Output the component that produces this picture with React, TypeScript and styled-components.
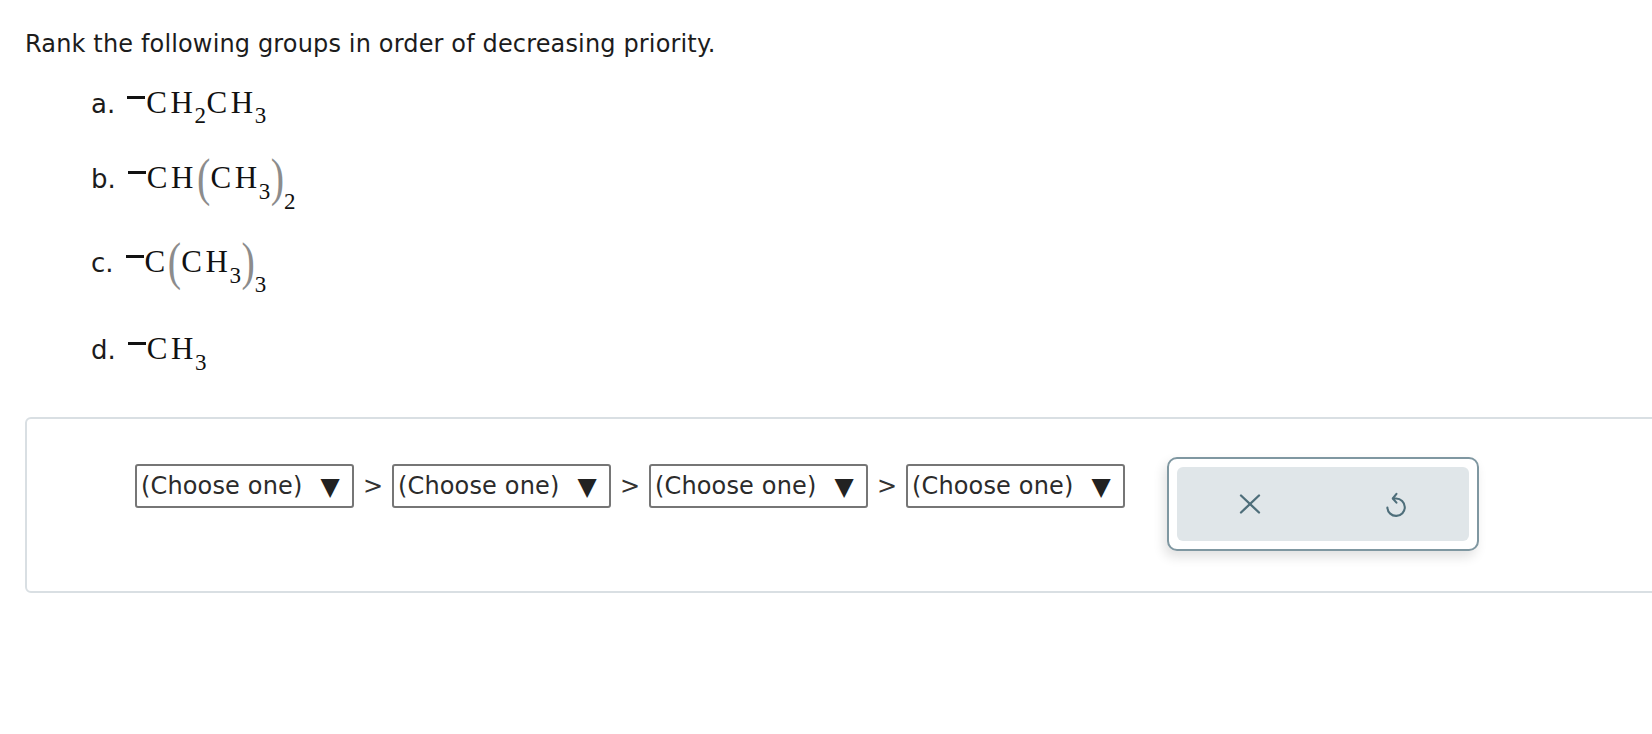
import React from "react";
import styled, { createGlobalStyle } from "styled-components";

const Global = createGlobalStyle`
  html, body { margin: 0; padding: 0; background: #ffffff; overflow: hidden; }
  body { font-family: "DejaVu Sans", Verdana, sans-serif; color: #1c1c1c; }
  * { box-sizing: border-box; }
`;

const Page = styled.main`
  padding: 30px 0 0 25px;
`;

const Prompt = styled.p`
  margin: 0;
  font-size: 24px;
  line-height: 28px;
  letter-spacing: 0.15px;
  color: #1c1c1c;
`;

const Options = styled.ol`
  list-style: none;
  margin: 24px 0 0 0;
  padding: 0 0 0 66px;
`;

const Option = styled.li<{ $gap: number }>`
  height: 44px;
  line-height: 44px;
  margin-top: ${(p) => p.$gap}px;
  font-size: 26px;
  white-space: nowrap;
  color: #1c1c1c;
`;

const Formula = styled.span`
  margin-left: 12px;
  font-family: "Liberation Serif", "Times New Roman", serif;
  font-size: 31px;
  line-height: 1;
  color: #111;
`;

const Bond = styled.span`
  display: inline-block;
  width: 18px;
  height: 3px;
  background: #111;
  vertical-align: 14px;
  margin-right: 1px;
`;

const El = styled.span`
  letter-spacing: 3.6px;
  margin-right: -2px;
`;

const Sub = styled.span<{ $drop: number }>`
  font-family: "Liberation Serif", "Times New Roman", serif;
  font-size: 23px;
  line-height: 1;
  letter-spacing: 0;
  margin-right: 0.5px;
  vertical-align: -${(p) => p.$drop}px;
`;

const Paren = styled.span<{ $ml?: number }>`
  display: inline-block;
  font-size: 40px;
  line-height: 1;
  color: #8c8c8c;
  vertical-align: -3.4px;
  transform: scaleY(1.3);
  margin-left: ${(p) => p.$ml ?? 0}px;
`;

const AnswerPanel = styled.section`
  margin-top: 45px;
  width: 1700px;
  height: 176px;
  border: 2px solid #d9dfe3;
  border-radius: 6px;
  padding: 38px 0 40px 108px;
  display: flex;
  align-items: flex-start;
`;

const RankRow = styled.div`
  display: flex;
  align-items: center;
  margin-top: 7px;
`;

const Select = styled.div`
  width: 219px;
  height: 44px;
  border: 2px solid #767676;
  border-radius: 3px;
  padding: 0 12px 0 4px;
  display: flex;
  align-items: center;
  justify-content: space-between;
  font-size: 24px;
  letter-spacing: 0.15px;
  color: #2b2b2b;
  background: #fff;
`;

const Caret = styled.span`
  font-size: 25px;
  color: #222;
`;

const Sep = styled.span`
  width: 38px;
  text-align: center;
  font-size: 24px;
  color: #333;
`;

const Controls = styled.div`
  margin-left: 42px;
  width: 312px;
  height: 94px;
  border: 2px solid #7f97a1;
  border-radius: 10px;
  padding: 8px;
  background: #fff;
  box-shadow: -3px 6px 12px rgba(0, 0, 0, 0.12);
`;

const ControlsInner = styled.div`
  display: flex;
  height: 100%;
  background: #e0e6e9;
  border-radius: 6px;
`;

const IconButton = styled.button`
  flex: 1;
  display: flex;
  align-items: center;
  justify-content: center;
  border: none;
  background: transparent;
  color: #4e6e7a;
  padding: 0;
  cursor: pointer;
`;

const CloseIcon = () => (
  <svg width="22" height="20" viewBox="0 0 22 20" fill="none" stroke="currentColor" strokeWidth="2.3" strokeLinecap="round">
    <line x1="2" y1="1.5" x2="20" y2="18.5" />
    <line x1="20" y1="1.5" x2="2" y2="18.5" />
  </svg>
);

const UndoIcon = () => (
  <svg width="22" height="28" viewBox="0 0 24 30" fill="none" stroke="currentColor" strokeWidth="2.3" strokeLinecap="round" strokeLinejoin="round">
    <path d="M9 9 H12 A9.5 9.5 0 1 1 2.6 19" />
    <path d="M12.5 4 L8.5 9 L12.5 13.5" />
  </svg>
);

const choices = [0, 1, 2, 3];

export default function App() {
  return (
    <>
      <Global />
      <Page>
        <Prompt>Rank the following groups in order of decreasing priority.</Prompt>
        <Options>
          <Option $gap={0}>
            a.
            <Formula>
              <Bond />
              <El>CH</El>
              <Sub $drop={10}>2</Sub>
              <El>CH</El>
              <Sub $drop={10}>3</Sub>
            </Formula>
          </Option>
          <Option $gap={31}>
            b.
            <Formula>
              <Bond />
              <El>CH</El>
              <Paren $ml={2}>(</Paren>
              <El>CH</El>
              <Sub $drop={11}>3</Sub>
              <Paren>)</Paren>
              <Sub $drop={21}>2</Sub>
            </Formula>
          </Option>
          <Option $gap={40}>
            c.
            <Formula>
              <Bond />
              <El>C</El>
              <Paren $ml={1}>(</Paren>
              <El>CH</El>
              <Sub $drop={11}>3</Sub>
              <Paren>)</Paren>
              <Sub $drop={20}>3</Sub>
            </Formula>
          </Option>
          <Option $gap={43}>
            d.
            <Formula>
              <Bond />
              <El>CH</El>
              <Sub $drop={11}>3</Sub>
            </Formula>
          </Option>
        </Options>
        <AnswerPanel>
          <RankRow>
            {choices.map((i) => (
              <React.Fragment key={i}>
                {i > 0 && <Sep>&gt;</Sep>}
                <Select role="combobox" aria-label={`Rank ${i + 1}`}>
                  <span>(Choose one)</span>
                  <Caret>▼</Caret>
                </Select>
              </React.Fragment>
            ))}
          </RankRow>
          <Controls>
            <ControlsInner>
              <IconButton aria-label="Clear">
                <CloseIcon />
              </IconButton>
              <IconButton aria-label="Undo">
                <UndoIcon />
              </IconButton>
            </ControlsInner>
          </Controls>
        </AnswerPanel>
      </Page>
    </>
  );
}
